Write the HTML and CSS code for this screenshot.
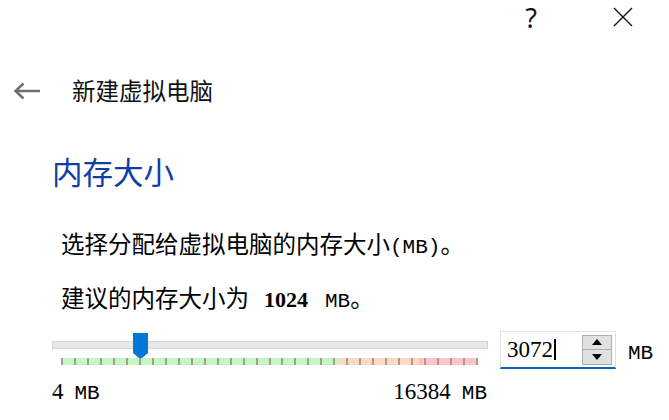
FILE: index.html
```html
<!DOCTYPE html>
<html lang="zh-CN">
<head>
<meta charset="utf-8">
<title>新建虚拟电脑</title>
<link rel="stylesheet" href="styles.css">
</head>
<body>
<div class="window">
  <header class="titlebar">
    <button class="tb-btn help">?</button>
    <button class="tb-btn close" aria-label="关闭">
      <svg width="20" height="20" viewBox="0 0 20 20"><path d="M1 1L19 19M19 1L1 19" stroke="#111" stroke-width="1.4" fill="none"/></svg>
    </button>
  </header>

  <nav class="nav">
    <svg class="back" width="28" height="18" viewBox="0 0 28 18"><path d="M2.5 9H27M10.5 1.5L2.5 9L10.5 16.5" stroke="#707070" stroke-width="2.5" fill="none"/></svg>
    <span class="nav-title">新建虚拟电脑</span>
  </nav>

  <main class="page">
    <h1 class="heading">内存大小</h1>
    <p class="desc">选择分配给虚拟电脑的内存大小<span class="mono">(MB)</span>。</p>
    <p class="desc second">建议的内存大小为<b class="num rec">1024</b><span class="mono">MB</span>。</p>

    <div class="mem-row">
      <div class="slider-col">
        <div class="slider">
          <div class="track"></div>
          <svg class="thumb" width="15" height="26" viewBox="0 0 15 26"><path d="M0 0H15V20L8.5 25.5H6.5L0 20Z" fill="#0078d7"/></svg>
          <div class="ticks"></div>
        </div>
        <div class="range-labels">
          <span><span class="num">4</span><span class="mono gap">MB</span></span>
          <span><span class="num">16384</span><span class="mono gap">MB</span></span>
        </div>
      </div>
      <div class="spin">
        <div class="spin-value"><span class="num">3072</span><span class="caret"></span></div>
        <div class="spin-btns">
          <span class="spin-btn up"><svg width="10" height="6" viewBox="0 0 10 6"><path d="M0 6L5 0L10 6Z" fill="#000"/></svg></span>
          <span class="spin-btn down"><svg width="10" height="6" viewBox="0 0 10 6"><path d="M0 0L10 0L5 6Z" fill="#000"/></svg></span>
        </div>
      </div>
      <span class="unit mono">MB</span>
    </div>
  </main>
</div>
</body>
</html>
```

FILE: styles.css
```css
html, body {
  margin: 0;
  padding: 0;
  background: #ffffff;
}

body {
  font-family: "Noto Sans CJK SC", "Noto Sans", sans-serif;
  color: #000;
  width: 669px;
  height: 420px;
  overflow: hidden;
}

.titlebar {
  height: 38px;
  display: flex;
  justify-content: flex-end;
  align-items: center;
  padding-right: 23px;
  gap: 46px;
}

.tb-btn {
  width: 46px;
  height: 38px;
  border: 0;
  background: transparent;
  padding: 0;
  display: flex;
  align-items: center;
  justify-content: center;
  color: #111;
}

.help {
  font-family: "Noto Sans", sans-serif;
  font-size: 27px;
  font-weight: 400;
  line-height: 1;
  margin-top: -3px;
}

.close svg {
  margin-top: -4px;
}

.nav {
  margin-top: 37px;
  height: 32px;
  display: flex;
  align-items: center;
  padding-left: 13px;
}

.back {
  display: block;
}

.nav-title {
  margin-left: 31px;
  font-size: 23.5px;
  line-height: 1;
  color: #111;
}

.page {
  padding-left: 52px;
}

.heading {
  margin: 49px 0 0 0;
  font-size: 30.5px;
  font-weight: 400;
  line-height: 1;
  color: #0f3fa6;
}

.desc {
  margin: 45px 0 0 9px;
  font-size: 23.5px;
  line-height: 1;
  color: #000;
  white-space: nowrap;
}

.desc.second {
  margin-top: 28px;
}

.mono {
  font-family: "Liberation Mono", monospace;
  font-size: 21px;
}

.num {
  font-family: "Liberation Serif", serif;
  font-size: 23px;
}

b.num {
  font-weight: 700;
  font-size: 22px;
}

.rec {
  margin: 0 17px 0 15px;
}

.mem-row {
  margin-top: 19px;
  display: flex;
  align-items: flex-start;
}

.slider-col {
  width: 436px;
  margin-top: 2px;
}

.slider {
  position: relative;
  height: 32px;
}

.track {
  position: absolute;
  left: 0;
  right: 0;
  top: 8px;
  height: 6px;
  border: 1px solid #d3d5d5;
  background: #e6e8e8;
}

.thumb {
  position: absolute;
  left: 81px;
  top: 0;
  display: block;
}

.ticks {
  position: absolute;
  left: 9px;
  top: 25px;
  width: 417px;
  height: 7px;
  background:
    repeating-linear-gradient(to right, #a39e92 0 2px, transparent 2px 12.97px),
    linear-gradient(to right,
      #c4f7c4 0, #c4f7c4 276px,
      #e0e8b0 277px, #ffd8c4 280px,
      #ffd8c4 358px, #ffb0b0 359px, #ffc4c8 361px,
      #ffc4c8 100%);
}

.range-labels {
  margin-top: 15px;
  display: flex;
  justify-content: space-between;
  align-items: baseline;
  line-height: 1;
  white-space: nowrap;
  padding-right: 1px;
}

.range-labels .num {
  font-size: 23px;
}

.gap {
  margin-left: 11px;
}

.spin {
  margin-left: 12px;
  width: 116px;
  height: 38px;
  box-sizing: border-box;
  border: 1px solid #e2e2e2;
  border-bottom: 2px solid #0a63b8;
  display: flex;
  align-items: center;
  justify-content: space-between;
  padding: 0 3px 0 6px;
}

.spin-value {
  display: flex;
  align-items: center;
  line-height: 1;
}

.spin-value .num {
  font-size: 23px;
}

.caret {
  display: inline-block;
  width: 2px;
  height: 21px;
  background: #000;
  margin-left: 1px;
}

.spin-btns {
  display: flex;
  flex-direction: column;
  width: 30px;
  height: 30px;
  box-sizing: border-box;
  border: 1px solid #adadad;
  background: #e1e1e1;
  margin-top: 1px;
}

.spin-btn {
  flex: 1;
  display: flex;
  align-items: center;
  justify-content: center;
}

.spin-btn.down {
  border-top: 1px solid #adadad;
}

.unit {
  margin-left: 12px;
  margin-top: 12px;
  line-height: 1;
}
```
